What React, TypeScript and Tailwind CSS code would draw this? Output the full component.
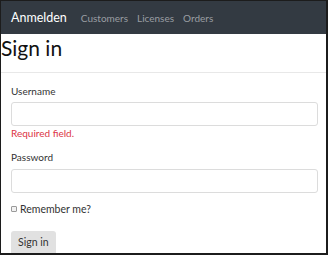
import React from "react";

export default function App() {
  const font = { fontFamily: 'Lato, "Noto Sans", sans-serif' };
  return (
    <div
      style={font}
      className="w-[328px] h-[255px] overflow-hidden bg-white border-l border-t border-r-2 border-b-2 border-[#1c1c1c] flex flex-col"
    >
      <nav className="h-[33px] shrink-0 bg-[#333a42] flex items-center px-[10px]">
        <span className="text-[12.5px] leading-none text-white mr-[14px] mt-[1px]">Anmelden</span>
        <div className="flex items-center gap-[9px] text-[10px] leading-none text-[#9a9ea3] mt-[1px]">
          <span>Customers</span>
          <span>Licenses</span>
          <span>Orders</span>
        </div>
      </nav>
      <h1 className="h-[28px] shrink-0 text-[21px] leading-[28px] text-[#111] font-normal">Sign in</h1>
      <div className="mt-[10px] h-px bg-[#e8e8e8] shrink-0" />
      <form className="flex flex-col px-[10px] text-[10px] text-[#333]">
        <label className="mt-[10px] leading-[16px]">Username</label>
        <div className="mt-[3px] h-[24px] w-[307px] border border-[#dcdcdc] rounded-[3px]" />
        <div className="leading-[14px] text-[#dc3545]">Required field.</div>
        <label className="mt-[9px] leading-[16px]">Password</label>
        <div className="mt-[4px] h-[24px] w-[307px] border border-[#dcdcdc] rounded-[3px]" />
        <div className="mt-[8px] flex items-center gap-[3px] leading-[16px] text-[10.5px]">
          <span className="inline-block w-[6px] h-[6px] border border-[#9a9a9a] rounded-[1px] bg-[#f2f2f2]" />
          <span>Remember me?</span>
        </div>
        <div className="mt-[14px]">
          <button type="button" className="bg-[#e1e1e1] rounded-[3px] px-[7px] pt-[3px] pb-[10px] leading-[16px] text-[10.5px] text-[#333]">
            Sign in
          </button>
        </div>
      </form>
    </div>
  );
}
